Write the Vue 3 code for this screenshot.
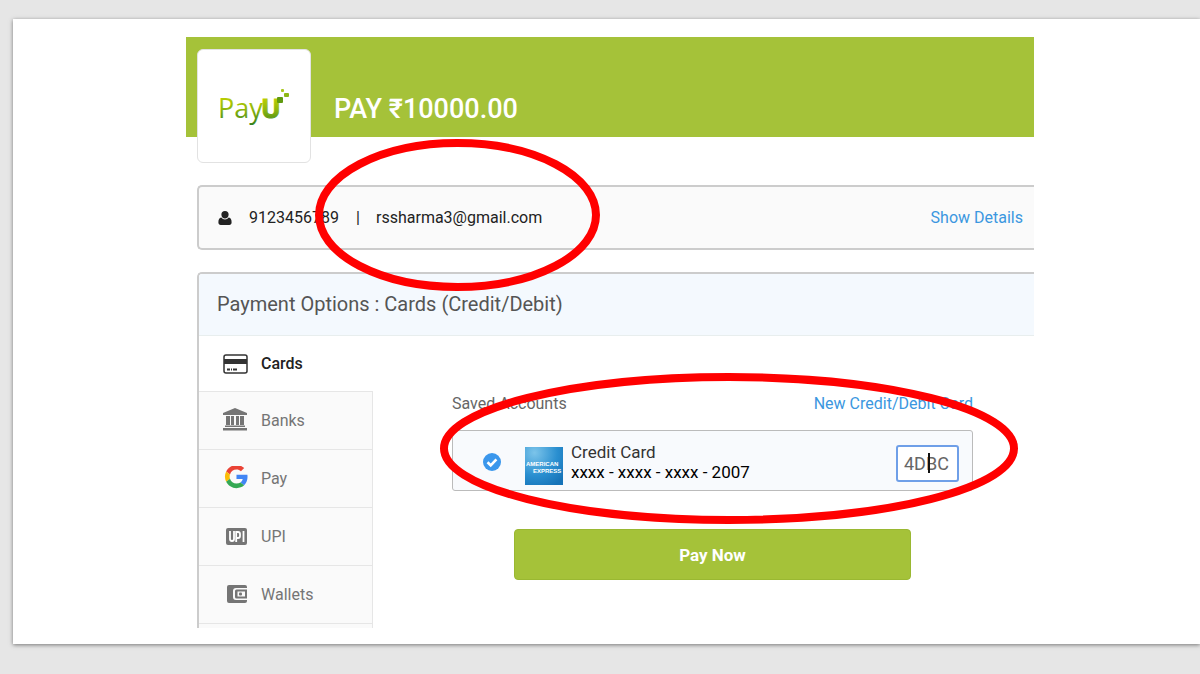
<script setup>
import { ref } from 'vue'

const tabs = ['Cards', 'Banks', 'Pay', 'UPI', 'Wallets']
const active = ref('Cards')
const cvv = ref('4DBC')
</script>

<template>
  <main class="sheet">
    <div class="checkout">
      <header class="banner">
        <div class="logo">
          <svg width="80" height="44" viewBox="0 0 80 44" role="img" aria-label="PayU">
            <defs>
              <linearGradient id="payu" x1="0" y1="0" x2="0" y2="1">
                <stop offset="0.2" stop-color="#c0d000" />
                <stop offset="0.55" stop-color="#8fb70c" />
                <stop offset="1" stop-color="#2f7d1c" />
              </linearGradient>
            </defs>
            <text class="logo-pay" x="4" y="34" fill="url(#payu)">Pay</text>
            <text class="logo-u" x="47" y="34" fill="url(#payu)">U</text>
            <rect x="63" y="13" width="6" height="6" rx="1" fill="#5f9a10" />
            <rect x="70" y="9" width="5" height="4" rx="1" fill="#8db814" />
            <rect x="67" y="5" width="3" height="3" rx="1" fill="#a9c71c" />
          </svg>
        </div>
        <h1>PAY ₹10000.00</h1>
      </header>

      <section class="contact">
        <svg class="person" width="14" height="14" viewBox="0 0 14 14" aria-hidden="true">
          <path d="M7 0a3.600 3.600 0 0 1 3.600 3.700C10.600 5.900 9 7.500 7 7.500S3.400 5.900 3.400 3.700A3.600 3.600 0 0 1 7 0zM3.300 6.600C4.300 7.800 5.500 8.500 7 8.500s2.700-.7 3.700-1.900C13 6.900 13.600 9 13.600 11.500c0 1.600-.9 2.500-2.300 2.500H2.700C1.300 14 .4 13.100.4 11.500.4 9 1 6.900 3.300 6.600z" fill="#222" />
        </svg>
        <span class="phone">9123456789</span>
        <span class="bar">|</span>
        <span>rssharma3@gmail.com</span>
        <a class="link details" href="#details">Show Details</a>
        <svg class="ring ring-contact" aria-hidden="true"><ellipse cx="50%" cy="50%" /></svg>
      </section>

      <section class="panel">
        <h2>Payment Options : Cards (Credit/Debit)</h2>
        <div class="body">
          <nav class="tabs">
            <button
              v-for="tab in tabs"
              :key="tab"
              type="button"
              :class="['tab', { active: tab === active }]"
              @click="active = tab"
            >
              <svg v-if="tab === 'Cards'" width="26" height="26" viewBox="0 0 26 26" aria-hidden="true">
                <rect x="1" y="4" width="23" height="18" rx="2" fill="#fff" stroke="#333" stroke-width="1.500" />
                <path d="M1 8h23v5H1z" fill="#333" />
                <path d="M4 18.500h3M8 18.500h1M10 18.500h4" stroke="#333" stroke-width="2" />
              </svg>
              <svg v-else-if="tab === 'Banks'" width="26" height="26" viewBox="0 0 26 26" fill="#757575" aria-hidden="true">
                <path d="M12 0 24 5v2H0V5zM3 8h4v9H3zM8 8h3v9H8zM13 8h3v9h-3zM17 8h4v9h-4zM2 17.500h20V19H2zM0 20h24v2.500H0z" />
              </svg>
              <svg v-else-if="tab === 'Pay'" width="26" height="26" viewBox="-4 2 54 54" aria-hidden="true">
                <path fill="#EA4335" d="M24 9.500c3.540 0 6.710 1.220 9.210 3.600l6.850-6.850C35.900 2.380 30.470 0 24 0 14.620 0 6.510 5.380 2.560 13.220l7.980 6.190C12.430 13.720 17.740 9.500 24 9.500z" />
                <path fill="#4285F4" d="M46.980 24.550c0-1.570-.15-3.090-.38-4.550H24v9.020h12.940c-.58 2.960-2.260 5.480-4.780 7.180l7.730 6c4.510-4.180 7.090-10.360 7.090-17.650z" />
                <path fill="#FBBC05" d="M10.530 28.590c-.48-1.450-.76-2.990-.76-4.590s.27-3.140.76-4.590l-7.980-6.190C.92 16.460 0 20.120 0 24s.92 7.540 2.560 10.780z" />
                <path fill="#34A853" d="M24 48c6.480 0 11.930-2.130 15.890-5.810l-7.730-6c-2.150 1.450-4.920 2.300-8.160 2.300-6.260 0-11.570-4.220-13.470-9.910l-7.980 6.190C6.510 42.620 14.620 48 24 48z" />
              </svg>
              <svg v-else-if="tab === 'UPI'" width="26" height="26" viewBox="0 0 26 26" aria-hidden="true">
                <rect x="3" y="4" width="21" height="17" rx="2" fill="#757575" />
                <path d="M7 7v8q0 2 2 2t2-2V7M13.200 18V8H15q2 0 2 2v2q0 2-2 2h-1.800M20.500 7v11" fill="none" stroke="#fff" stroke-width="1.800" />
              </svg>
              <svg v-else width="26" height="26" viewBox="0 0 26 26" aria-hidden="true">
                <path d="M6 3h16q2 0 2 2v1H13q-3 0-3 3v6q0 3 3 3h11v1q0 2-2 2H6q-2 0-2-2V5q0-2 2-2z" fill="#757575" />
                <path fill-rule="evenodd" d="M13.500 7.500H24v9H13.500q-1.500 0-1.500-1.500v-6q0-1.500 1.500-1.500zM14.500 9.500v5h7.500v-5z" fill="#757575" />
                <rect x="16" y="10.500" width="3" height="3" rx="1" fill="#757575" />
              </svg>
              <span>{{ tab }}</span>
            </button>
          </nav>

          <form class="accounts" @submit.prevent>
            <div class="accounts-head">
              <span>Saved Accounts</span>
              <a class="link" href="#new-card">New Credit/Debit Card</a>
            </div>
            <div class="saved">
              <label class="choice">
                <span class="pick">
                  <input type="radio" name="card" checked />
                  <svg width="18" height="18" viewBox="0 0 18 18" aria-hidden="true">
                    <path d="M4.500 9.300 7.700 12.300 13.400 6.300" fill="none" stroke="#fff" stroke-width="2.600" />
                  </svg>
                </span>
                <svg class="amex" width="38" height="38" viewBox="0 0 38 38" role="img" aria-label="American Express">
                  <defs>
                    <radialGradient id="amex" cx="0.25" cy="0.15" r="1">
                      <stop offset="0" stop-color="#7cc4ea" />
                      <stop offset="0.6" stop-color="#2a8fd0" />
                      <stop offset="1" stop-color="#1673b8" />
                    </radialGradient>
                  </defs>
                  <rect width="38" height="38" fill="url(#amex)" />
                  <text x="1" y="19">AMERICAN</text>
                  <text x="8" y="26">EXPRESS</text>
                </svg>
                <span class="card-text">
                  <span class="card-name">Credit Card</span>
                  <span class="card-number">xxxx - xxxx - xxxx - 2007</span>
                </span>
              </label>
              <span class="cvv">
                <input v-model="cvv" type="text" aria-label="CVV" maxlength="4" />
                <i class="caret"></i>
              </span>
              <svg class="ring ring-card" aria-hidden="true"><ellipse cx="50%" cy="50%" /></svg>
            </div>
            <button class="pay" type="submit">Pay Now</button>
          </form>
        </div>
      </section>
    </div>
  </main>
</template>

<style>
body {
  background: #e6e6e6;
}
</style>

<style scoped>
.sheet,
.sheet * {
  box-sizing: border-box;
}

.sheet {
  display: flow-root;
  margin: 19px 0 29px 13px;
  padding: 18px 166px 16px 173px;
  background: #fff;
  box-shadow: 0 1px 4px #777;
  font-family: Roboto, "Liberation Sans", sans-serif;
  font-size: 16px;
  line-height: 20px;
  color: #222;
}

.banner {
  display: flex;
  align-items: flex-start;
  gap: 23px;
  height: 100px;
  padding: 12px 12px 0 11px;
  background: #a5c239;
}

.logo {
  display: flex;
  flex: none;
  align-items: center;
  justify-content: center;
  width: 114px;
  height: 114px;
  border: 1px solid #e2e2e2;
  border-radius: 6px;
  background: #fff;
}

.logo-pay {
  font: 500 27px "Open Sans", sans-serif;
}

.logo-u {
  font: 700 26px "Open Sans", sans-serif;
  stroke: url(#payu);
  stroke-width: 1px;
}

h1 {
  margin: 44px 0 0;
  font-size: 27px;
  font-weight: 500;
  line-height: 32px;
  color: #fff;
}

.contact {
  position: relative;
  display: flex;
  align-items: center;
  height: 65px;
  margin: 48px 0 0 11px;
  padding: 0 11px 0 19px;
  border: 2px solid #ccc;
  border-width: 2px 0 2px 2px;
  border-radius: 5px 0 0 5px;
  background: #fafafa;
}

.phone {
  width: 107px;
  margin-left: 17px;
}

.person {
  flex: none;
}

.bar {
  width: 20px;
}

.link {
  color: #3b97e0;
  text-decoration: none;
}

.details {
  margin-left: auto;
}

.ring {
  position: absolute;
  z-index: 2;
  pointer-events: none;
}

.ring ellipse {
  rx: calc(50% - 4px);
  ry: calc(50% - 4px);
  fill: none;
  stroke: #f00;
  stroke-width: 8px;
}

.ring-contact {
  left: 116px;
  top: -48px;
  width: 285px;
  height: 152px;
}

.ring-card {
  left: -13px;
  top: -58px;
  width: calc(100% + 59px);
  height: 151px;
}

.panel {
  margin: 22px 0 0 11px;
  border: 2px solid #ccc;
  border-width: 2px 0 0 2px;
  border-radius: 5px 0 0 0;
}

h2 {
  margin: 0;
  padding: 18px;
  border-bottom: 1px solid #e8eeee;
  border-radius: 3px 0 0 0;
  background: #f4f9fe;
  font-size: 20px;
  font-weight: 400;
  line-height: 25px;
  color: #555;
}

.body {
  display: flex;
}

.tabs {
  flex: none;
  width: 174px;
  padding-bottom: 4px;
  background: #fafafa;
  border-right: 1px solid #e6e6e6;
}

.tab {
  display: flex;
  align-items: center;
  gap: 12px;
  width: 100%;
  height: 58px;
  padding: 0 24px;
  border: 0;
  border-bottom: 1px solid #e6e6e6;
  background: none;
  font: inherit;
  color: #757575;
}

.tab.active {
  width: 174px;
  height: 56px;
  background: #fff;
  font-weight: 500;
  color: #222;
}

.accounts {
  flex: 1;
  padding: 58px 61px 0 79px;
}

.accounts-head {
  display: flex;
  justify-content: space-between;
  color: #666;
}

.saved {
  position: relative;
  display: flex;
  align-items: center;
  justify-content: space-between;
  height: 61px;
  margin-top: 16px;
  padding: 0 13px 0 30px;
  border: 1px solid #bbb;
  border-radius: 3px;
  background: #f8fafd;
}

.choice {
  display: flex;
  align-items: center;
}

.pick {
  display: grid;
  margin-top: 2px;
}

.pick > * {
  grid-area: 1 / 1;
}

.pick input {
  appearance: none;
  width: 18px;
  height: 18px;
  margin: 0;
  border-radius: 50%;
  background: #3b97ec;
}

.pick svg {
  z-index: 1;
  pointer-events: none;
}

.amex {
  margin: 10px 8px 0 24px;
}

.amex text {
  font: 700 6px "Liberation Sans", sans-serif;
  fill: #fff;
}

.card-text {
  display: flex;
  flex-direction: column;
  margin-top: 2px;
  font-size: 17px;
}

.card-name {
  color: #333;
}

.card-number {
  color: #000;
}

.cvv {
  position: relative;
  display: flex;
  margin-top: 5px;
}

.cvv input {
  width: 63px;
  height: 37px;
  padding: 0 6px;
  border: 2px solid #6f9fe8;
  border-radius: 3px;
  outline: 0;
  background: #fff;
  font: 400 18px Roboto, sans-serif;
  color: #666;
}

.caret {
  position: absolute;
  left: 32px;
  top: 8px;
  width: 2px;
  height: 20px;
  background: #111;
}

.pay {
  display: block;
  width: calc(100% - 124px);
  height: 51px;
  margin: 38px auto 0;
  border: 1px solid #9ab832;
  border-radius: 4px;
  background: #a5c239;
  font: 700 17px Roboto, sans-serif;
  color: #fff;
}
</style>
